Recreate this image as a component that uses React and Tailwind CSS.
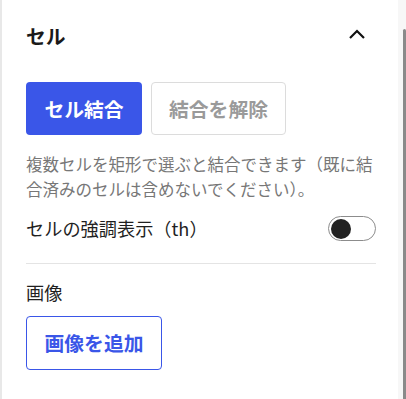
import React, { useState } from 'react';

function Toggle({ on, onChange }) {
    return (
        <button
            type="button"
            role="switch"
            aria-checked={on}
            onClick={() => onChange(!on)}
            className="flex h-[25px] w-[48px] items-center rounded-full border border-[#8c8c8c] bg-white px-[2px]">
            <span className={`${on ? 'translate-x-[23px]' : 'translate-x-0'} block h-[20px] w-[20px] rounded-full bg-[#222222] transition-transform`}/>
        </button>
    );
}

function App() {
    const [highlight, setHighlight] = useState(false);

    return (
        <div className="flex h-[399px] w-[406px] bg-white" style={{ fontFamily: '"Noto Sans CJK JP", "Noto Sans", sans-serif' }}>
            <div className="flex-1 border-l-2 border-[#e8e8e8] bg-white pl-[24px] pr-[22px]">
                <div className="flex h-[72px] items-center justify-between pb-[1px]">
                    <h2 className="text-[19.8px] font-bold leading-none text-[#1a1a1a]">セル</h2>
                    <svg width="18" height="12" viewBox="0 0 18 12" className="mr-[10px] mt-[-3px]" fill="none" stroke="#111" strokeWidth="2.2">
                        <path d="M2 10 L9 3 L16 10"/>
                    </svg>
                </div>
                <div className="mt-[10px] flex gap-[9px]">
                    <button type="button" className="h-[53px] w-[116px] rounded-[4px] bg-[#3a56e8] text-[19.8px] font-bold text-white">
                        セル結合
                    </button>
                    <button type="button" className="h-[53px] w-[135px] rounded-[4px] border border-[#dcdcdc] bg-white text-[19.8px] font-bold text-[#9a9a9a]">
                        結合を解除
                    </button>
                </div>
                <p className="mt-[17px] text-[16.5px] leading-[25px] text-[#777777]">
                    複数セルを矩形で選ぶと結合できます（既に結合済みのセルは含めないでください）。
                </p>
                <div className="mt-[13px] flex items-center justify-between">
                    <span className="text-[18.2px] text-[#1f1f1f]">セルの強調表示（th）</span>
                    <Toggle on={highlight} onChange={setHighlight}/>
                </div>
                <div className="mt-[21px] border-t border-[#e4e4e4]"/>
                <div className="mt-[15px] text-[18.2px] leading-[26px] text-[#1f1f1f]">画像</div>
                <button type="button" className="mt-[11px] h-[54px] w-[136px] rounded-[4px] border border-[#3a56e8] bg-white text-[19.8px] font-bold text-[#3a56e8]">
                    画像を追加
                </button>
            </div>
            <div className="flex w-[8px] flex-col bg-[#f7f7f7] pl-[5px] pt-[29px]">
                <div className="flex-1 rounded-t-full bg-[#8a8a8a]"/>
            </div>
        </div>
    );
}

export default App;
